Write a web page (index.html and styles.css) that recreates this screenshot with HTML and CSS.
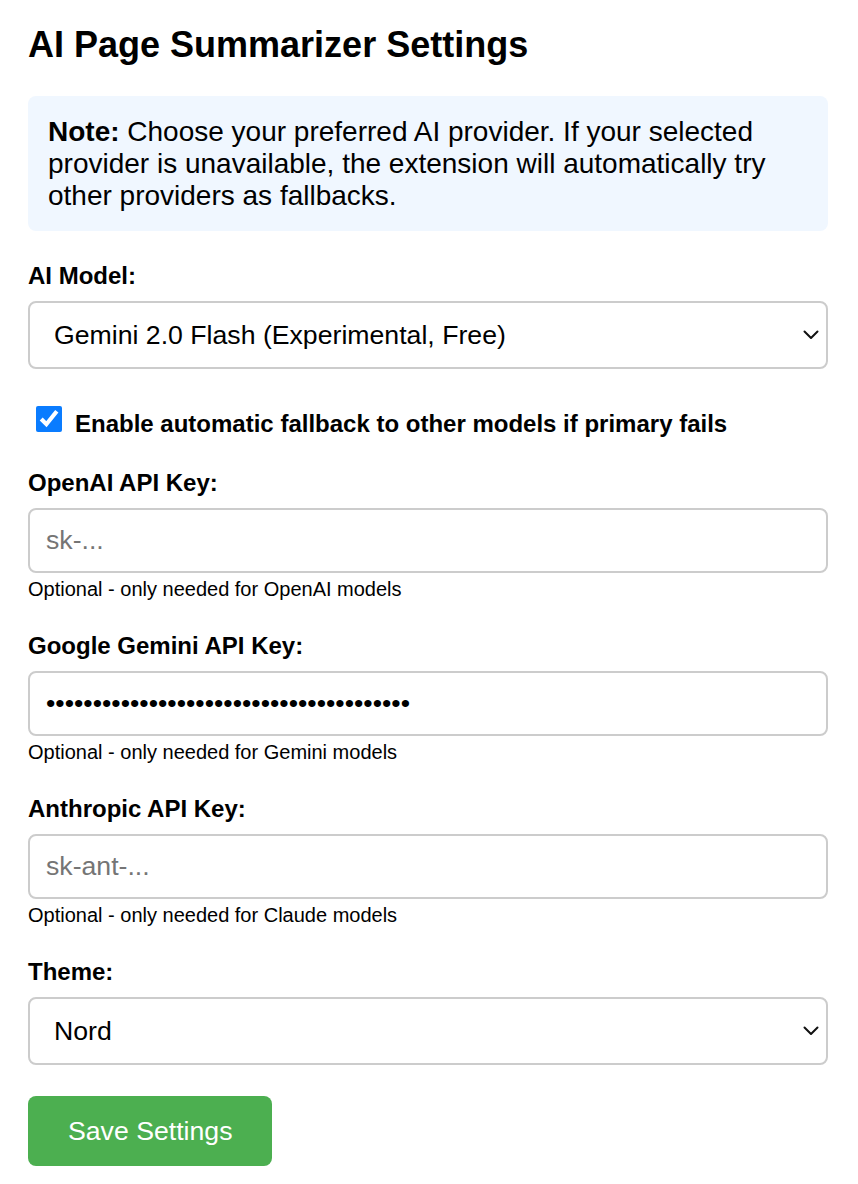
FILE: index.html
```html
<!DOCTYPE html>
<html lang="en">
<head>
<meta charset="utf-8">
<title>AI Page Summarizer Settings</title>
<link rel="stylesheet" href="styles.css">
</head>
<body>
<div class="page">
  <h1 class="title">AI Page Summarizer Settings</h1>

  <div class="note"><strong>Note:</strong> Choose your preferred AI provider. If your selected provider is unavailable, the extension will automatically try other providers as fallbacks.</div>

  <div class="group">
    <label class="label" for="model">AI Model:</label>
    <div class="select-wrap">
      <select id="model" class="select">
        <option>Gemini 2.0 Flash (Experimental, Free)</option>
      </select>
      <svg class="chevron" width="16" height="10" viewBox="0 0 16 10"><path d="M1.5 1.5 L8 8 L14.5 1.5" fill="none" stroke="#111" stroke-width="2" stroke-linecap="round" stroke-linejoin="round"/></svg>
    </div>
  </div>

  <label class="check-row"><input type="checkbox" class="check" checked><span class="check-text">Enable automatic fallback to other models if primary fails</span></label>

  <div class="group">
    <label class="label" for="openai">OpenAI API Key:</label>
    <input id="openai" class="input" type="password" placeholder="sk-...">
    <div class="help">Optional - only needed for OpenAI models</div>
  </div>

  <div class="group">
    <label class="label" for="gemini">Google Gemini API Key:</label>
    <input id="gemini" class="input" type="password" value="AIzaSyDxxxxxxxxxxxxxxxxxxxxxxxxxxxxxxxx">
    <div class="help">Optional - only needed for Gemini models</div>
  </div>

  <div class="group">
    <label class="label" for="anthropic">Anthropic API Key:</label>
    <input id="anthropic" class="input" type="password" placeholder="sk-ant-...">
    <div class="help">Optional - only needed for Claude models</div>
  </div>

  <div class="group">
    <label class="label" for="theme">Theme:</label>
    <div class="select-wrap">
      <select id="theme" class="select">
        <option>Nord</option>
      </select>
      <svg class="chevron" width="16" height="10" viewBox="0 0 16 10"><path d="M1.5 1.5 L8 8 L14.5 1.5" fill="none" stroke="#111" stroke-width="2" stroke-linecap="round" stroke-linejoin="round"/></svg>
    </div>
  </div>

  <button class="save" type="button">Save Settings</button>
</div>
</body>
</html>
```

FILE: styles.css
```css
html, body {
  margin: 0;
  padding: 0;
  background: #ffffff;
}

body {
  font-family: "Liberation Sans", Arial, Helvetica, sans-serif;
  color: #000;
}

.page {
  width: 800px;
  padding: 24px 0 0 28px;
}

.title {
  font-size: 36px;
  font-weight: bold;
  margin: 0 0 30px 0;
  line-height: normal;
}

.note {
  background: #f0f7ff;
  border-radius: 8px;
  padding: 20px 20px 19px 20px;
  font-size: 28px;
  line-height: normal;
  margin-bottom: 31px;
}

.note strong {
  font-weight: bold;
}

.group {
  margin-bottom: 31px;
}

.label {
  display: block;
  font-size: 24px;
  font-weight: bold;
  margin-bottom: 11px;
}

.select-wrap {
  position: relative;
}

.select {
  display: block;
  width: 100%;
  height: 68px;
  box-sizing: border-box;
  appearance: none;
  -webkit-appearance: none;
  background: #fff;
  border: 2px solid #cccccc;
  border-radius: 8px;
  padding: 0 50px 0 24px;
  font-family: "Liberation Sans", Arial, Helvetica, sans-serif;
  font-size: 26.67px;
  color: #000;
  margin: 0;
}

.chevron {
  position: absolute;
  right: 9px;
  top: 29px;
  pointer-events: none;
}

.check-row {
  display: flex;
  align-items: flex-start;
  font-size: 24px;
  font-weight: bold;
  margin: 0 0 31px 0;
}

.check {
  flex: none;
  width: 26px;
  height: 26px;
  margin: 6px 13px 6px 8px;
  accent-color: #0a7cff;
}

.check-text {
  padding-top: 10px;
}

.input {
  display: block;
  width: 100%;
  height: 65px;
  box-sizing: border-box;
  border: 2px solid #cccccc;
  border-radius: 8px;
  padding: 0 16px;
  font-family: "Liberation Sans", Arial, Helvetica, sans-serif;
  font-size: 26.67px;
  color: #000;
  margin: 0;
  background: #fff;
}

.input::placeholder {
  color: #757575;
}

.help {
  font-size: 20px;
  margin-top: 5px;
  line-height: normal;
}

.save {
  display: block;
  background: #4caf50;
  color: #fff;
  border: none;
  border-radius: 8px;
  padding: 0 40px;
  height: 70px;
  font-family: "Liberation Sans", Arial, Helvetica, sans-serif;
  font-size: 26.67px;
  margin: 0;
}
```
